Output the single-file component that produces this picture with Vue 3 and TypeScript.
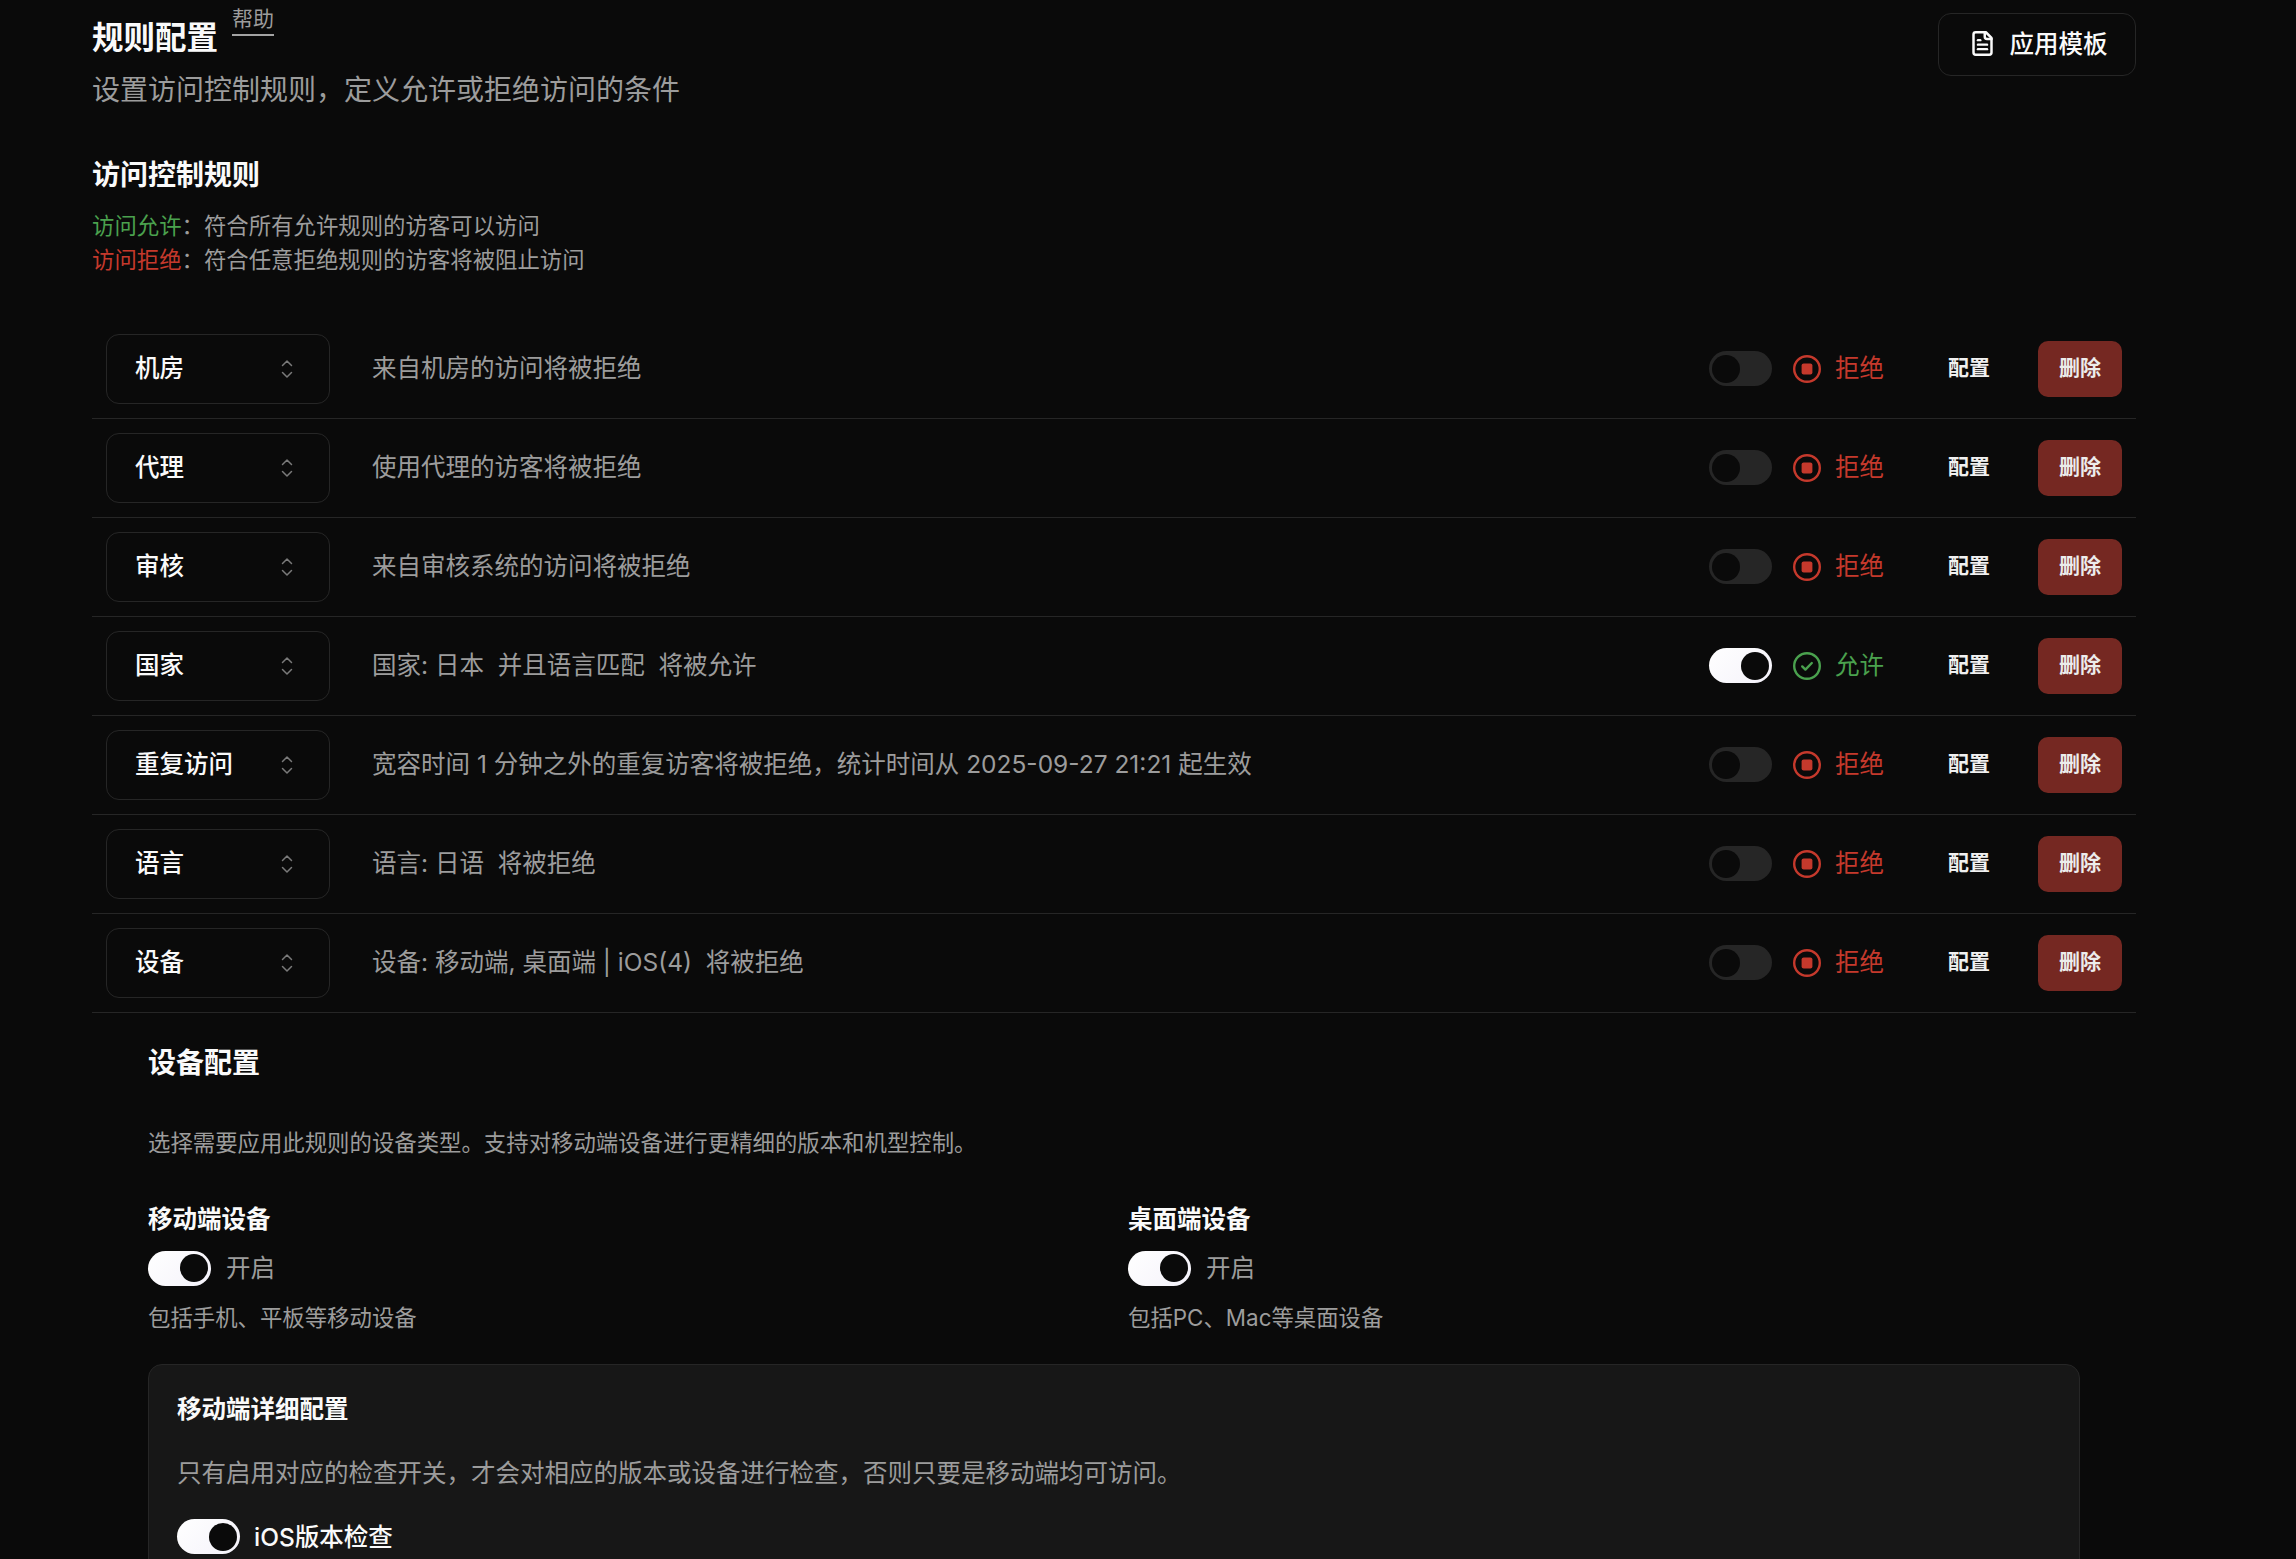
<script setup lang="ts">
interface Rule {
  type: string
  desc: string
  allow: boolean
}

const rules: Rule[] = [
  { type: '机房', desc: '来自机房的访问将被拒绝', allow: false },
  { type: '代理', desc: '使用代理的访客将被拒绝', allow: false },
  { type: '审核', desc: '来自审核系统的访问将被拒绝', allow: false },
  { type: '国家', desc: '国家: 日本  并且语言匹配  将被允许', allow: true },
  { type: '重复访问', desc: '宽容时间 1 分钟之外的重复访客将被拒绝\uFF0C统计时间从 2025-09-27 21:21 起生效', allow: false },
  { type: '语言', desc: '语言: 日语  将被拒绝', allow: false },
  { type: '设备', desc: '设备: 移动端, 桌面端 | iOS(4)  将被拒绝', allow: false }
]

const deviceCols = [
  { title: '移动端设备', hint: '包括手机、平板等移动设备' },
  { title: '桌面端设备', hint: '包括PC、Mac等桌面设备' }
]
</script>

<template>
  <div class="page">
    <header class="head">
      <div>
        <div class="title-line">
          <h1>规则配置</h1>
          <a class="help">帮助</a>
        </div>
        <p class="sub">设置访问控制规则&#xFF0C;定义允许或拒绝访问的条件</p>
      </div>
      <button class="tpl-btn">
        <svg width="27" height="27" viewBox="0 0 24 24" fill="none" stroke="currentColor" stroke-width="2.2" stroke-linecap="round" stroke-linejoin="round">
          <path d="M15 2H6a2 2 0 0 0-2 2v16a2 2 0 0 0 2 2h12a2 2 0 0 0 2-2V7Z" />
          <path d="M14 2v4a2 2 0 0 0 2 2h4" />
          <path d="M10 9H8" />
          <path d="M16 13H8" />
          <path d="M16 17H8" />
        </svg>
        应用模板
      </button>
    </header>

    <h2 class="section">访问控制规则</h2>
    <div class="legend">
      <div><span class="green">访问允许</span>&#xFF1A;符合所有允许规则的访客可以访问</div>
      <div><span class="red">访问拒绝</span>&#xFF1A;符合任意拒绝规则的访客将被阻止访问</div>
    </div>

    <div class="rules">
      <div v-for="rule in rules" :key="rule.type" class="rule">
        <div class="select">
          <span>{{ rule.type }}</span>
          <svg width="16" height="20" viewBox="0 0 16 20" fill="none" stroke="currentColor" stroke-width="1.5" stroke-linecap="round" stroke-linejoin="round">
            <path d="M3.5 6.5 8 2l4.5 4.5" />
            <path d="M3.5 13.5 8 18l4.5-4.5" />
          </svg>
        </div>
        <div class="desc">{{ rule.desc }}</div>
        <span class="switch" :class="{ on: rule.allow }"><i></i></span>
        <div class="state" :class="rule.allow ? 'green' : 'red'">
          <svg v-if="rule.allow" width="28" height="28" viewBox="0 0 28 28" fill="none" stroke="currentColor" stroke-width="2.4" stroke-linecap="round" stroke-linejoin="round">
            <circle cx="14" cy="14" r="12.8" />
            <path d="M9.2 14.4l3.2 3.2 6.4-6.6" />
          </svg>
          <svg v-else width="28" height="28" viewBox="0 0 28 28" fill="none">
            <circle cx="14" cy="14" r="12.8" stroke="currentColor" stroke-width="2.4" />
            <rect x="8.6" y="8.6" width="10.8" height="10.8" rx="2" fill="currentColor" />
          </svg>
          <span>{{ rule.allow ? '允许' : '拒绝' }}</span>
        </div>
        <a class="cfg">配置</a>
        <button class="del">删除</button>
      </div>
    </div>

    <section class="device">
      <h3>设备配置</h3>
      <p class="device-intro">选择需要应用此规则的设备类型。支持对移动端设备进行更精细的版本和机型控制。</p>
      <div class="cols">
        <div v-for="col in deviceCols" :key="col.title">
          <div class="col-title">{{ col.title }}</div>
          <div class="toggle-line">
            <span class="switch on"><i></i></span>
            <span class="toggle-label">开启</span>
          </div>
          <div class="col-hint">{{ col.hint }}</div>
        </div>
      </div>
      <div class="panel">
        <div class="panel-title">移动端详细配置</div>
        <p class="panel-text">只有启用对应的检查开关&#xFF0C;才会对相应的版本或设备进行检查&#xFF0C;否则只要是移动端均可访问。</p>
        <div class="toggle-line">
          <span class="switch on"><i></i></span>
          <span class="ios">iOS版本检查</span>
        </div>
      </div>
    </section>
  </div>
</template>

<style>
html,
body {
  margin: 0;
  background: #0a0a0a;
  overflow: hidden;
}
</style>

<style scoped>
.page {
  --muted: #9c9c9c;
  box-sizing: border-box;
  height: 1559px;
  overflow: hidden;
  padding: 0 160px 0 92px;
  background: #0a0a0a;
  color: #fafafa;
  font-family: Inter, "Noto Sans CJK SC", sans-serif;
  font-size: 22.4px;
}

.head {
  display: flex;
  justify-content: space-between;
  align-items: flex-start;
}

.title-line {
  display: flex;
  align-items: flex-start;
  height: 61px;
}

h1 {
  margin: 15px 0 0;
  font-size: 31.5px;
  line-height: 46px;
  font-weight: 600;
}

.help {
  margin: 5px 0 0 14px;
  height: 29px;
  font-size: 21px;
  line-height: 28px;
  color: var(--muted);
  border-bottom: 2px solid #a3a3a3;
}

.sub {
  margin: 9px 0 0;
  font-size: 28px;
  line-height: 40px;
  color: var(--muted);
}

.tpl-btn {
  display: flex;
  align-items: center;
  justify-content: center;
  gap: 14px;
  box-sizing: border-box;
  width: 198px;
  height: 63px;
  margin-top: 13px;
  padding: 0 0 2px 2px;
  background: #0a0a0a;
  border: 1.6px solid #262626;
  border-radius: 13px;
  color: #fafafa;
  font: 500 24.5px/34px Inter, "Noto Sans CJK SC", sans-serif;
}

.section {
  margin: 45px 0 0;
  font-size: 28px;
  line-height: 40px;
  font-weight: 600;
}

.legend {
  margin-top: 14px;
  line-height: 34px;
  color: var(--muted);
}

.green {
  color: #4aa14e;
}

.red {
  color: #c5392c;
}

.rules {
  margin-top: 42.5px;
}

.rule {
  display: flex;
  align-items: center;
  box-sizing: border-box;
  height: 99px;
  padding: 0 14px;
  border-bottom: 1.6px solid #262626;
}

.select {
  display: flex;
  align-items: center;
  justify-content: space-between;
  box-sizing: border-box;
  width: 224px;
  height: 70px;
  padding: 0 34px 0 28px;
  border: 1.6px solid #262626;
  border-radius: 13px;
  font-size: 24.5px;
  line-height: 34px;
  font-weight: 500;
}

.select span {
  padding-bottom: 2px;
}

.select svg {
  color: #7a7a7a;
}

.desc {
  flex: 1;
  margin-left: 42px;
  padding-bottom: 2px;
  font-size: 24.5px;
  line-height: 34px;
  color: var(--muted);
  white-space: pre;
}

.switch {
  display: inline-flex;
  align-items: center;
  flex: none;
  box-sizing: border-box;
  width: 63px;
  height: 35px;
  padding: 0 3px;
  border-radius: 18px;
  background: #262626;
}

.switch i {
  width: 28px;
  height: 28px;
  border-radius: 50%;
  background: #0a0a0a;
}

.switch.on {
  justify-content: flex-end;
  background: linear-gradient(135deg, #fff, #f4f2fa);
}

.state {
  display: flex;
  align-items: center;
  gap: 14px;
  width: 144px;
  margin-left: 21px;
  font-size: 24.5px;
  line-height: 34px;
}

.state span {
  padding-bottom: 2px;
}

.cfg {
  width: 64px;
  padding-bottom: 1px;
  color: #f0f0f0;
  font-size: 21px;
  line-height: 34px;
  font-weight: 600;
  text-align: center;
}

.del {
  box-sizing: border-box;
  width: 84px;
  height: 56px;
  margin-left: 37px;
  padding-bottom: 2px;
  border: none;
  border-radius: 10px;
  background: #752822;
  color: #ececec;
  font: 600 21px/34px Inter, "Noto Sans CJK SC", sans-serif;
}

.device {
  padding: 0 56px;
}

h3 {
  margin: 30px 0 0;
  font-size: 28px;
  line-height: 40px;
  font-weight: 600;
}

.device-intro {
  margin: 43.5px 0 0;
  line-height: 34px;
  color: var(--muted);
}

.cols {
  display: grid;
  grid-template-columns: 1fr 1fr;
  column-gap: 28px;
  margin-top: 42px;
}

.col-title {
  font-size: 24.5px;
  line-height: 34px;
  font-weight: 600;
}

.toggle-line {
  display: flex;
  align-items: center;
  gap: 15px;
  margin-top: 14.5px;
  line-height: 34px;
}

.toggle-label {
  font-size: 24.5px;
  color: var(--muted);
}

.col-hint {
  margin-top: 15.5px;
  line-height: 34px;
  color: var(--muted);
}

.panel {
  box-sizing: border-box;
  height: 400px;
  margin-top: 28.5px;
  padding: 27.5px 28px;
  background: #171717;
  border: 1.6px solid #262626;
  border-radius: 14px;
}

.panel-title {
  font-size: 24.5px;
  line-height: 34px;
  font-weight: 600;
}

.panel-text {
  margin: 30px 0 0;
  font-size: 24.5px;
  line-height: 34px;
  color: var(--muted);
}

.panel .toggle-line {
  gap: 14px;
  margin-top: 29px;
}

.ios {
  font-size: 24.5px;
  font-weight: 500;
}
</style>
